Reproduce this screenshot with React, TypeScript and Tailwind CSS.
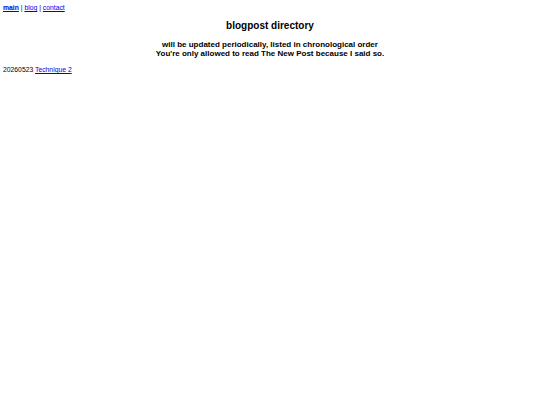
export default function App() {
  return (
    <div className="min-h-[405px] bg-white font-['Liberation_Sans',Arial,sans-serif] text-black">
      <nav className="px-[3px] pt-[3px] text-[6.8px] leading-[9px]">
        <a href="#" className="font-bold text-[#0000ee] underline">main</a>
        {" | "}
        <a href="#" className="text-[#0000ee] underline">blog</a>
        {" | "}
        <a href="#" className="text-[#0000ee] underline">contact</a>
      </nav>
      <h1 className="mt-[7.5px] text-center text-[10px] font-bold leading-[12px]">blogpost directory</h1>
      <div className="mt-[8.5px] text-center text-[8px] font-bold leading-[9px]">
        <p>will be updated periodically, listed in chronological order</p>
        <p>You're only allowed to read The New Post because I said so.</p>
      </div>
      <p className="mt-[7px] px-[3px] text-[6.8px] leading-[9px]">
        20260523 <a href="#" className="text-[#0000ee] underline">Technique 2</a>
      </p>
    </div>
  );
}
